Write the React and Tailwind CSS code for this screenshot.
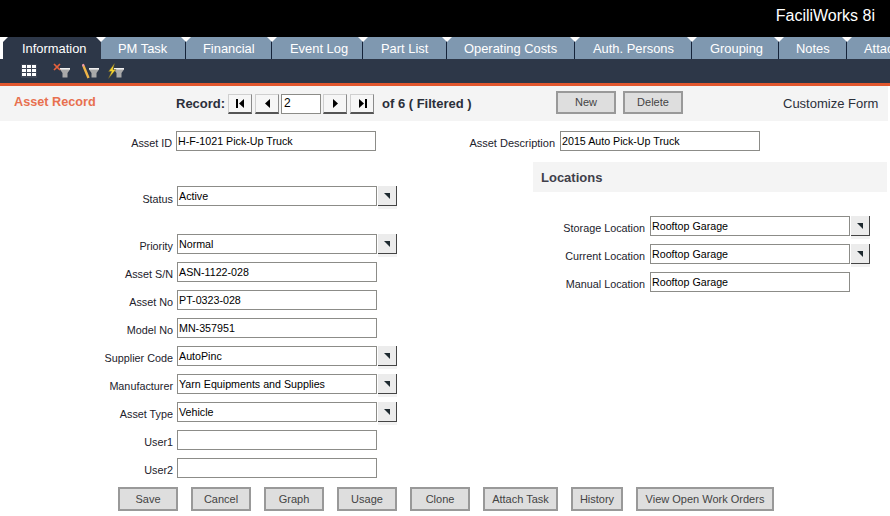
import { Fragment } from "react";

const tabs = [
  { label: "Information", width: "w-[98px]", active: true },
  { label: "PM Task", width: "w-[85px]" },
  { label: "Financial", width: "w-[86px]" },
  { label: "Event Log", width: "w-[91px]", pad: "pl-[18px]" },
  { label: "Part List", width: "w-[84px]", pad: "pl-[18px]" },
  { label: "Operating Costs", width: "w-[128px]" },
  { label: "Auth. Persons", width: "w-[117px]", pad: "pl-[18px]" },
  { label: "Grouping", width: "w-[87px]", pad: "pl-[18px]" },
  { label: "Notes", width: "w-[68px]" },
  { label: "Attach", width: "w-[43px]", last: true },
];

const leftFields = [
  { label: "Priority", value: "Normal", select: true },
  { label: "Asset S/N", value: "ASN-1122-028" },
  { label: "Asset No", value: "PT-0323-028" },
  { label: "Model No", value: "MN-357951" },
  { label: "Supplier Code", value: "AutoPinc", select: true },
  { label: "Manufacturer", value: "Yarn Equipments and Supplies", select: true },
  { label: "Asset Type", value: "Vehicle", select: true },
  { label: "User1", value: "" },
  { label: "User2", value: "" },
];

const locations = [
  { label: "Storage Location", select: true },
  { label: "Current Location", select: true },
  { label: "Manual Location" },
];

const actions = [
  { label: "Save", width: "w-[60px]" },
  { label: "Cancel", width: "w-[60px]" },
  { label: "Graph", width: "w-[60px]" },
  { label: "Usage", width: "w-[60px]" },
  { label: "Clone", width: "w-[60px]" },
  { label: "Attach Task", width: "w-[75px]" },
  { label: "History", width: "w-[52px]" },
  { label: "View Open Work Orders", width: "w-[138px]" },
];

function Tab({ label, width, active, pad, last }) {
  if (active) {
    return (
      <div className={`${width} relative h-[22px] shrink-0 bg-[#2d3748] pl-[19px] leading-[23px] text-white`}>
        <span className="absolute left-0 top-0 h-0 w-0 border-r-[5px] border-t-[5px] border-r-transparent border-t-white" />
        {label}
      </div>
    );
  }
  return (
    <div className={`${width} ${pad || "pl-[17px]"} ${last ? "overflow-hidden" : "border-r border-[#16243a]"} relative h-[22px] shrink-0 whitespace-nowrap bg-[#7f98b0] leading-[23px] text-white`}>
      {label}
    </div>
  );
}

// white notches sit on the tab joins
function TabNotch({ x }) {
  return <span style={{ left: x }} className="absolute top-0 z-10 h-0 w-0 border-x-[5px] border-t-[5px] border-x-transparent border-t-white" />;
}

function FilterFunnel() {
  return (
    <>
      <path d="M7 5h10v1.500L14.500 10v4.500h-5V10L7 6.500z" fill="#a9a9a9" />
      <path d="M7 5h10v1.500H7z" fill="#f0f0f0" />
    </>
  );
}

function GridIcon() {
  return (
    <svg width="16" height="14" viewBox="0 0 16 14" className="ml-[21px] shrink-0">
      <rect width="16" height="14" fill="#3d4554" />
      {[1, 5, 9].map((y) => (
        <Fragment key={y}>
          {[1, 6, 11].map((x) => (
            <rect key={x} x={x} y={y} width="4" height="3" fill="#fff" />
          ))}
        </Fragment>
      ))}
    </svg>
  );
}

function ClearFilterIcon() {
  return (
    <svg width="18" height="16" viewBox="0 0 18 16" className="ml-4 shrink-0">
      <FilterFunnel />
      <path d="M1 1l6 6M7 1L1 7" stroke="#e8623c" strokeWidth="1.7" />
    </svg>
  );
}

function EditFilterIcon() {
  return (
    <svg width="18" height="16" viewBox="0 0 18 16" className="ml-[11px] shrink-0">
      <FilterFunnel />
      <path d="M1.500 3l5 12" stroke="#f0b548" strokeWidth="2.400" />
      <path d="M0.800 1.200l0.800 2" stroke="#ee9aa8" strokeWidth="2.400" />
    </svg>
  );
}

function QuickFilterIcon() {
  return (
    <svg width="18" height="16" viewBox="0 0 18 16" className="ml-[7px] shrink-0">
      <FilterFunnel />
      <path d="M7.500 0.500L1.500 8.500h3L1.500 15.500l7.500-9H6z" fill="#f2d12e" stroke="#5b5230" strokeWidth="0.5" />
    </svg>
  );
}

function NavButton({ dir, bar }) {
  return (
    <button className="flex h-5 w-6 shrink-0 items-center justify-center border border-[#cfcfcf] border-r-[#8a8a8a] border-b-2 border-b-[#555] bg-[#f6f6f6] p-0">
      <svg width="9" height="9" viewBox="0 0 9 9">
        {dir === "left" ? (
          <>
            {bar && <rect x="0" y="0" width="2" height="9" fill="#000" />}
            <path d={bar ? "M8 0v9L3 4.500z" : "M7 0v9L2 4.500z"} fill="#000" />
          </>
        ) : (
          <>
            <path d={bar ? "M1 0v9l5-4.500z" : "M2 0v9l5-4.500z"} fill="#000" />
            {bar && <rect x="7" y="0" width="2" height="9" fill="#000" />}
          </>
        )}
      </svg>
    </button>
  );
}

function TextBox({ value }) {
  return (
    <div className="h-5 w-[200px] shrink-0 truncate border border-[#8c8c88] bg-white pl-[1px] text-[10.7px] leading-[18px] text-black">
      {value}
    </div>
  );
}

function SelectBox({ value }) {
  return (
    <div className="flex shrink-0">
      <TextBox value={value} />
      <div className="ml-px flex h-5 w-[19px] items-center justify-center border-r border-b border-[#444] bg-[#ececec] shadow-[0_3px_0_#f2f2f2]">
        <svg width="6" height="6" viewBox="0 0 6 6">
          <path d="M0 0h6v6z" fill="#1f2a30" />
        </svg>
      </div>
    </div>
  );
}

function Label({ children, className }) {
  return (
    <div className={`${className} shrink-0 whitespace-nowrap pt-[4px] text-right text-[10.8px] leading-[16px] text-[#22222c]`}>
      {children}
    </div>
  );
}

export default function App() {
  return (
    <div className="h-[516px] w-[890px] overflow-hidden bg-white font-['Liberation_Sans',Arial,sans-serif]">
      <div className="h-[37px] bg-black pr-[15px] pt-[7px] text-right text-[16px] leading-[18px] text-white">
        FaciliWorks 8i
      </div>

      <div className="relative flex h-[22px] border-l-[3px] border-white bg-black text-[12.9px]">
        {tabs.map((tab) => (
          <Tab key={tab.label} {...tab} />
        ))}
        <TabNotch x={93} />
        <TabNotch x={178} />
        <TabNotch x={264} />
        <TabNotch x={355} />
        <TabNotch x={439} />
        <TabNotch x={567} />
        <TabNotch x={684} />
        <TabNotch x={771} />
        <TabNotch x={839} />
      </div>

      <div className="flex h-[24px] items-center bg-[#2d3748]">
        <GridIcon />
        <ClearFilterIcon />
        <EditFilterIcon />
        <QuickFilterIcon />
      </div>
      <div className="h-[3px] bg-[#e2572e]" />

      <div className="flex h-[35px] w-[888px] items-center bg-[#f4f4f4] pl-[14px]">
        <div className="w-[162px] shrink-0 pb-[2px] text-[12.7px] font-bold text-[#e8704f]">Asset Record</div>
        <div className="w-[52px] shrink-0 text-[13px] font-bold text-[#2b2f3a]">Record:</div>
        <div className="flex items-center">
          <NavButton dir="left" bar />
          <div className="ml-[3px]">
            <NavButton dir="left" />
          </div>
          <div className="ml-[2px] h-5 w-[40px] border border-[#8c8c88] bg-white pl-[2px] text-[12px] leading-[16px]">2</div>
          <div className="ml-[2px]">
            <NavButton dir="right" />
          </div>
          <div className="ml-[3px]">
            <NavButton dir="right" bar />
          </div>
        </div>
        <div className="ml-2 w-[174px] shrink-0 text-[13px] font-bold text-[#2b2f3a]">of 6 ( Filtered )</div>
        <button className="mb-[2px] h-[23px] w-[60px] shrink-0 border-2 border-[#999] bg-[#dedede] p-0 text-[11px] text-[#444]">New</button>
        <button className="mb-[2px] ml-[7px] h-[23px] w-[60px] shrink-0 border-2 border-[#999] bg-[#dedede] p-0 text-[11px] text-[#444]">Delete</button>
        <div className="ml-[100px] mt-px shrink-0 text-[13px] text-[#2b2f3a]">Customize Form</div>
      </div>

      <div className="flex pt-[10px]">
        <div className="w-[533px] shrink-0">
          <div className="flex">
            <Label className="w-[172px]">Asset ID</Label>
            <div className="ml-1">
              <TextBox value="H-F-1021 Pick-Up Truck" />
            </div>
          </div>
          <div className="mt-[35px] flex">
            <Label className="mt-px w-[173px]">Status</Label>
            <div className="ml-1">
              <SelectBox value="Active" />
            </div>
          </div>
          <div className="mt-[27px] flex flex-col gap-2">
            {leftFields.map((field) => (
              <div key={field.label} className="flex">
                <Label className="w-[173px]">{field.label}</Label>
                <div className="ml-1">
                  {field.select ? <SelectBox value={field.value} /> : <TextBox value={field.value} />}
                </div>
              </div>
            ))}
          </div>
        </div>

        <div className="w-[354px] shrink-0">
          <div className="flex">
            <Label className="w-[22px] text-[11px] [direction:rtl]">Asset Description</Label>
            <div className="ml-[5px]">
              <TextBox value="2015 Auto Pick-Up Truck" />
            </div>
          </div>
          <div className="mt-[11px] h-[30px] bg-[#f4f4f4] pl-2 text-[13px] font-bold leading-[32px] text-[#40404a]">Locations</div>
          <div className="mt-[24px] flex flex-col gap-2">
            {locations.map((loc) => (
              <div key={loc.label} className="flex">
                <Label className="w-[112px]">{loc.label}</Label>
                <div className="ml-[5px]">
                  {loc.select ? <SelectBox value="Rooftop Garage" /> : <TextBox value="Rooftop Garage" />}
                </div>
              </div>
            ))}
          </div>
        </div>
      </div>

      <div className="mt-[9px] flex gap-[13px] pl-[118px]">
        {actions.map((a) => (
          <button key={a.label} className={`${a.width} h-[24px] shrink-0 border-2 border-[#999] bg-[#dedede] p-0 text-[11px] text-[#444]`}>
            {a.label}
          </button>
        ))}
      </div>
    </div>
  );
}
